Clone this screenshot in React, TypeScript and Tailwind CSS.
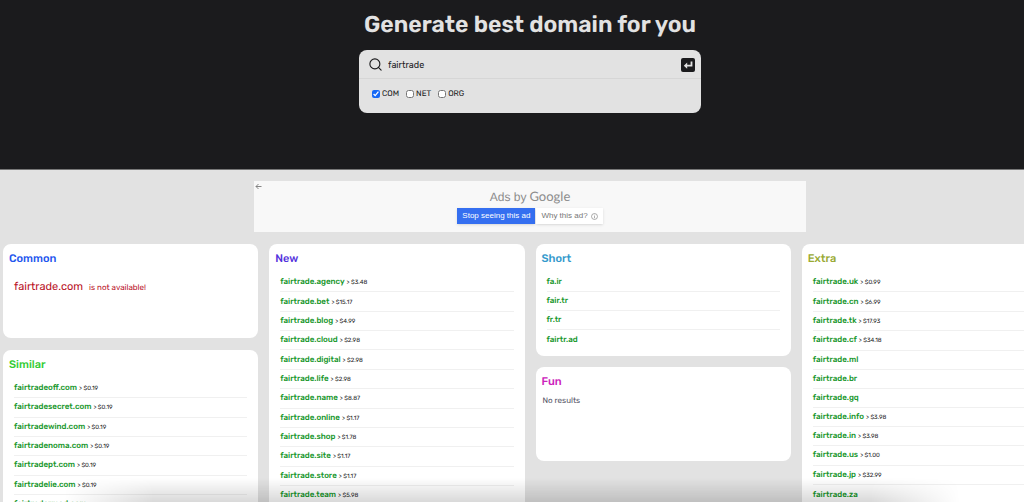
import { useState } from "react";
import { Search } from "lucide-react";

type Domain = { name: string; price?: string };

const similar: Domain[] = [
  { name: "fairtradeoff.com", price: "$0.19" },
  { name: "fairtradesecret.com", price: "$0.19" },
  { name: "fairtradewind.com", price: "$0.19" },
  { name: "fairtradenoma.com", price: "$0.19" },
  { name: "fairtradept.com", price: "$0.19" },
  { name: "fairtradelie.com", price: "$0.19" },
  { name: "fairtradermed.com" },
];

const fresh: Domain[] = [
  { name: "fairtrade.agency", price: "$3.48" },
  { name: "fairtrade.bet", price: "$15.17" },
  { name: "fairtrade.blog", price: "$4.99" },
  { name: "fairtrade.cloud", price: "$2.98" },
  { name: "fairtrade.digital", price: "$2.98" },
  { name: "fairtrade.life", price: "$2.98" },
  { name: "fairtrade.name", price: "$8.87" },
  { name: "fairtrade.online", price: "$1.17" },
  { name: "fairtrade.shop", price: "$1.78" },
  { name: "fairtrade.site", price: "$1.17" },
  { name: "fairtrade.store", price: "$1.17" },
  { name: "fairtrade.team", price: "$5.98" },
];

const short: Domain[] = [
  { name: "fa.ir" },
  { name: "fair.tr" },
  { name: "fr.tr" },
  { name: "fairtr.ad" },
];

const extra: Domain[] = [
  { name: "fairtrade.uk", price: "$0.99" },
  { name: "fairtrade.cn", price: "$6.99" },
  { name: "fairtrade.tk", price: "$17.93" },
  { name: "fairtrade.cf", price: "$34.18" },
  { name: "fairtrade.ml" },
  { name: "fairtrade.br" },
  { name: "fairtrade.gq" },
  { name: "fairtrade.info", price: "$3.98" },
  { name: "fairtrade.in", price: "$3.98" },
  { name: "fairtrade.us", price: "$1.00" },
  { name: "fairtrade.jp", price: "$32.99" },
  { name: "fairtrade.za" },
];

function Card({
  title,
  color,
  children,
}: {
  title: string;
  color: string;
  children: React.ReactNode;
}) {
  return (
    <section className="min-h-[94px] rounded-lg bg-white px-[6px] pt-[6px] pb-[7px]">
      <h2 className={`text-[11px] leading-[18px] font-medium ${color}`}>{title}</h2>
      {children}
    </section>
  );
}

function DomainList({ items, size = "" }: { items: Domain[]; size?: string }) {
  return (
    <ul className={`mx-[5px] mt-[5px] flex flex-col ${size}`}>
      {items.map((d) => (
        <li
          key={d.name}
          className={`flex min-h-[19px] items-center border-b border-[#f0f0f0] whitespace-nowrap last:border-0 ${
            d.price ? "grow" : ""
          }`}
        >
          <a href="#" className="text-[8px] leading-[18px] font-medium text-[#16962a]">
            {d.name}
          </a>
          {d.price && (
            <span className="ml-[2px] text-[6px] leading-[18px] text-[#222]">
              &gt; {d.price}
            </span>
          )}
        </li>
      ))}
    </ul>
  );
}

export default function App() {
  const [query, setQuery] = useState("fairtrade");
  const [zones, setZones] = useState<Record<string, boolean>>({
    COM: true,
    NET: false,
    ORG: false,
  });

  return (
    <div className="relative h-screen overflow-hidden bg-[#e2e2e2] font-['Rubik','Roboto',sans-serif] [text-rendering:geometricPrecision]">
      <div className="min-w-[1060px]">
        <header className="flex h-[170px] flex-col items-center border-b border-[#777] bg-[#1b1b1d] pt-2">
          <h1 className="text-[23px] leading-8 font-semibold text-[#e2e2e2]">
            Generate best domain for you
          </h1>
          <form
            onSubmit={(e) => e.preventDefault()}
            className="mt-[10px] w-[342px] rounded-lg bg-[#e2e2e2] pb-[11px] text-[#1b1b1d]"
          >
            <div className="flex h-[29px] items-center border-b border-[#d6d6d6] pt-px pr-[6px] pl-[9px]">
              <Search size={15} strokeWidth={1.8} />
              <input
                aria-label="Domain name"
                value={query}
                onChange={(e) => setQuery(e.target.value)}
                className="ml-[5px] min-w-0 flex-1 bg-transparent text-[9px] leading-4 outline-none"
              />
              <button
                type="submit"
                aria-label="Search"
                className="flex size-[14px] items-center justify-center rounded-[2px] bg-[#1b1b1d]"
              >
                <svg viewBox="0 0 14 14" className="size-[14px]" fill="none" stroke="#e1e1e1" strokeWidth="1.8">
                  <path d="M10.5 3.5v4.2H5" />
                  <path d="M6.2 4.6L2.8 7.7L6.2 10.8z" fill="#e1e1e1" stroke="none" />
                </svg>
              </button>
            </div>
            <div className="flex gap-[7px] pt-[7px] pl-[13px]">
              {Object.keys(zones).map((z) => (
                <label key={z} className="flex items-center gap-[2px] text-[8px] leading-4">
                  <input
                    type="checkbox"
                    checked={zones[z]}
                    onChange={() => setZones({ ...zones, [z]: !zones[z] })}
                    className="size-2 accent-[#1668f5]"
                  />
                  {z}
                </label>
              ))}
            </div>
          </form>
        </header>

        <aside className="relative mx-auto mt-[11px] flex h-[51px] w-[552px] flex-col items-center bg-[#f8f8f8] pt-[7px] font-['Liberation_Sans',sans-serif]">
          <button
            type="button"
            aria-label="Back"
            className="absolute top-[2px] left-[1px] size-[7px]"
          >
            <svg viewBox="0 0 7 7" fill="none" stroke="#777" strokeWidth="0.9">
              <path d="M6.5 3.5H1M3.5 1L1 3.5L3.5 6" />
            </svg>
          </button>
          <p className="flex h-4 items-baseline gap-[3px] text-xs leading-4 text-[#8c8c8c]">
            Ads by <span className="font-['Lato',sans-serif] text-[13px] leading-4">Google</span>
          </p>
          <div className="mt-1 flex gap-px text-[8px] leading-4">
            <button type="button" className="bg-[#356ff0] px-[5px] text-white shadow">
              Stop seeing this ad
            </button>
            <button
              type="button"
              className="flex items-center gap-[3px] bg-white px-[5px] text-[#777] shadow"
            >
              Why this ad?
              <svg viewBox="0 0 8 8" className="size-[7px]" fill="none" stroke="#777" strokeWidth="0.7">
                <circle cx="4" cy="4" r="3.4" />
                <path d="M4 3.5V6M4 2v0.8" />
              </svg>
            </button>
          </div>
        </aside>

        <main className="mt-3 grid grid-cols-4 items-start gap-[11px] px-[3px]">
          <div className="flex flex-col gap-3">
            <Card title="Common" color="text-[#2255ee]">
              <p className="mx-[5px] mt-[10px] flex items-baseline gap-[6px] text-[#b9121f]">
                <span className="text-[11px] leading-[18px]">fairtrade.com</span>
                <span className="text-[8px] leading-[18px]">is not available!</span>
              </p>
            </Card>
            <Card title="Similar" color="text-[#33cc33]">
              <DomainList items={similar} size="min-h-[135px]" />
            </Card>
          </div>
          <Card title="New" color="text-[#5533dd]">
            <DomainList items={fresh} size="min-h-[232px]" />
          </Card>
          <div className="flex flex-col gap-[11px]">
            <Card title="Short" color="text-[#3399cc]">
              <DomainList items={short} />
            </Card>
            <Card title="Fun" color="text-[#cc22bb]">
              <p className="px-px text-[8px] leading-5 text-[#555566]">No results</p>
            </Card>
          </div>
          <Card title="Extra" color="text-[#99aa33]">
            <DomainList items={extra} size="min-h-[231px]" />
          </Card>
        </main>
      </div>
      <div className="pointer-events-none absolute inset-x-16 bottom-0 h-6 bg-linear-to-b from-transparent to-black/15 mask-x-from-90%" />
    </div>
  );
}
